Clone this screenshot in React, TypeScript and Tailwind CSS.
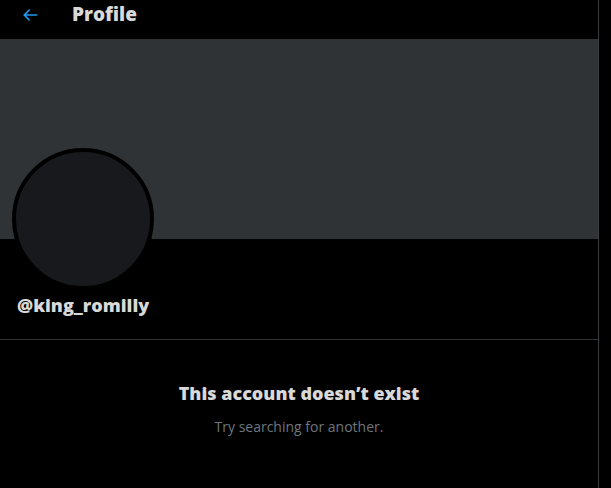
import React from 'react';

const BackArrow = () => (
    <svg viewBox="0 0 24 24" className="w-[20px] h-[20px] fill-[#1d9bf0]">
        <path d="M20 11H7.414l4.293-4.293c.39-.39.39-1.023 0-1.414s-1.023-.39-1.414 0l-6 6c-.39.39-.39 1.023 0 1.414l6 6c.195.195.45.293.707.293s.512-.098.707-.293c.39-.39.39-1.023 0-1.414L7.414 13H20c.553 0 1-.447 1-1s-.447-1-1-1z" />
    </svg>
);

const App: React.FC = () => {
    return (
        <div className="min-h-screen w-[611px] h-[488px] overflow-hidden bg-black font-['Open_Sans',sans-serif]">
            <div className="w-[599px] h-[488px] border-r border-[#3a3d40]">
                {/* header */}
                <div className="h-[39px] flex items-center pl-[20px] pb-[10px]">
                    <BackArrow />
                    <h1 className="ml-[32px] text-[19px] font-extrabold text-[#d9d9d9] leading-none">Profile</h1>
                </div>

                {/* banner */}
                <div className="h-[200px] bg-[#2f3336]" />

                {/* avatar + handle */}
                <div className="h-[100px] px-[12px] relative">
                    <div className="absolute left-[12px] top-[-91px] w-[142px] h-[142px] rounded-full bg-[#17191c] border-[4px] border-black" />
                    <div className="pt-[53px] pl-[5px] text-[18px] font-extrabold text-[#d9d9d9]">@king_romilly</div>
                </div>

                <div className="border-t border-[#2f3336]" />

                {/* empty state */}
                <div className="flex flex-col items-center pt-[40px]">
                    <p className="text-[18px] font-extrabold text-[#d9d9d9]">This account doesn’t exist</p>
                    <p className="mt-[9px] text-[14px] text-[#6e767d]">Try searching for another.</p>
                </div>
            </div>
        </div>
    );
};

export default App;
